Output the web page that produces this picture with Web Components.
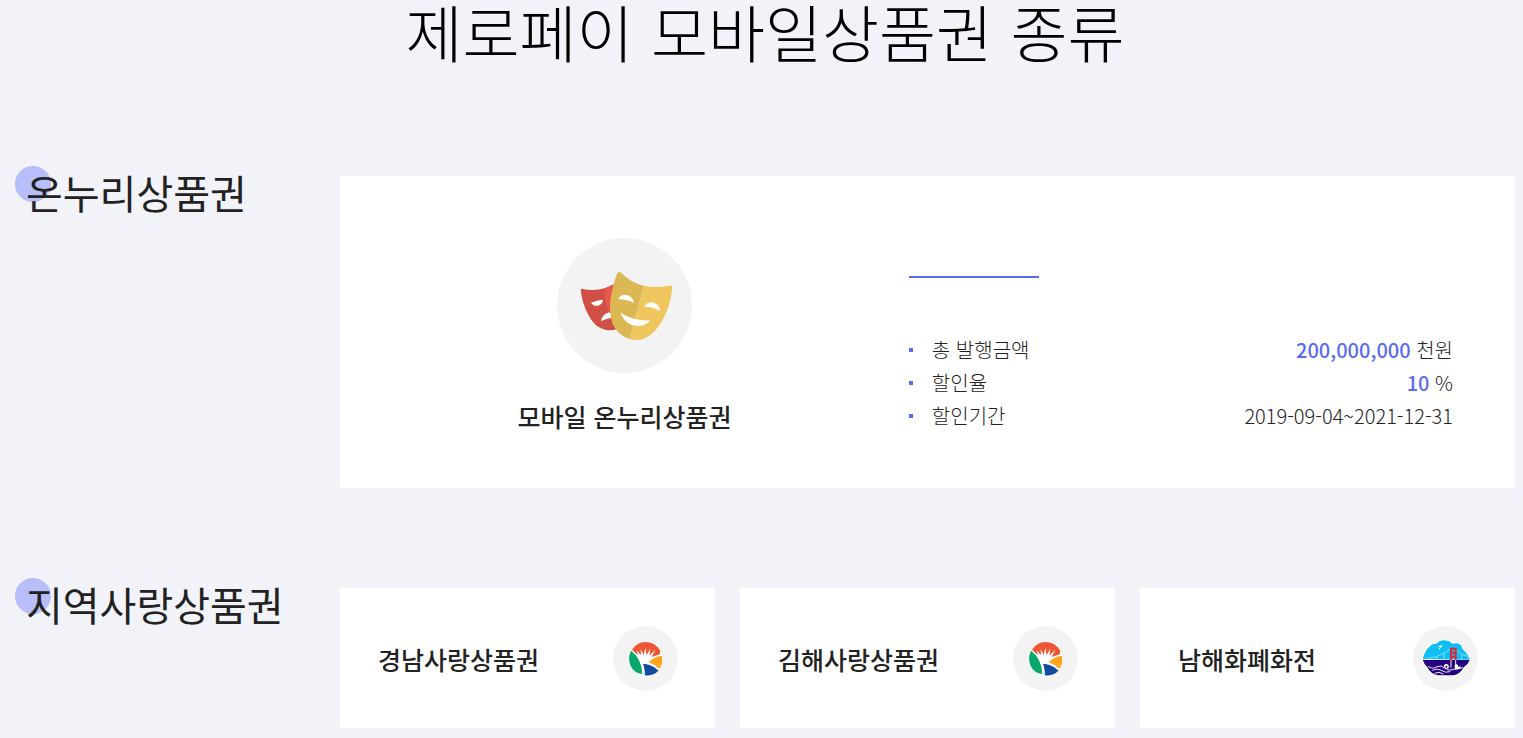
<!DOCTYPE html>
<html lang="ko">
<head>
<meta charset="UTF-8">
<meta name="viewport" content="width=device-width, initial-scale=1.0">
<title>제로페이 모바일상품권</title>
<style>
    body {
        margin: 0;
        background: #f2f3f9;
        color: #222;
        font-family: 'Noto Sans CJK KR', sans-serif;
    }
</style>
</head>
<body>
<gift-page>
    <span slot="title">제로페이 모바일상품권 종류</span>
    <gift-section>
        <span slot="title">온누리상품권</span>
        <gift-feature>
            <gift-icon slot="icon" name="masks"></gift-icon>
            <span slot="name">모바일 온누리상품권</span>
            <gift-info label="총 발행금액" value="200,000,000">천원</gift-info>
            <gift-info label="할인율" value="10">%</gift-info>
            <gift-info label="할인기간">2019-09-04~2021-12-31</gift-info>
        </gift-feature>
    </gift-section>
    <gift-section>
        <span slot="title">지역사랑상품권</span>
        <gift-card>경남사랑상품권<gift-icon slot="icon" name="gyeongnam"></gift-icon></gift-card>
        <gift-card>김해사랑상품권<gift-icon slot="icon" name="gyeongnam"></gift-icon></gift-card>
        <gift-card>남해화폐화전<gift-icon slot="icon" name="namhae"></gift-icon></gift-card>
    </gift-section>
</gift-page>

<script>
const ICONS = {
    masks: `
        <svg viewBox="36 24 405 405" aria-hidden="true">
            <circle cx="238.500" cy="226.500" r="202.500" fill="#f3f3f3"/>
            <path fill="#d05045" d="M107 178Q108 175 113 177Q151 184 181 174L207 163L216 297Q200 303 181 299Q148 292 128 251Q111 219 107 178Z"/>
            <path fill="#e9574f" d="M178 175Q196 171 208 162L207 237L188 248Z"/>
            <path fill="#fff" d="M138 218Q155 211 174 209Q172 224 158 227Q145 229 138 218ZM168 273Q173 251 194 247L212 262Q189 264 168 273Z"/>
            <path fill="#dcb855" d="M217 129Q224 122 232 131Q258 158 297 167L254 327Q218 316 203 282Q187 239 202 178Q208 151 217 129Z"/>
            <path fill="#efc65d" d="M297 167Q331 175 371 167Q383 165 382 174Q377 224 355 266Q330 313 296 326Q276 333 254 327Z"/>
            <path fill="#fff" d="M219 208Q228 192 245 195Q263 200 268 219Q244 207 219 208ZM297 230Q304 217 323 217Q343 222 346 243Q324 230 297 230ZM226 248Q266 273 315 271Q305 287 280 288Q242 287 226 248Z"/>
        </svg>`,
    gyeongnam: `
        <svg viewBox="24 33 195 195" aria-hidden="true">
            <circle cx="121.500" cy="130.500" r="97.500" fill="#f3f3f3"/>
            <circle cx="122" cy="132" r="51" fill="#fff"/>
            <path fill="#ef5634" d="M81 104Q96 81 121 81Q151 81 166 108Q167 117 160 119L140 126L151 104L133 122L136 101L125 121L121 99L116 120L107 102L108 121L94 105L99 120Q89 113 81 104Z"/>
            <path fill="#07a86b" d="M78 107Q110 130 112 177Q87 174 77 153Q67 130 78 107Z"/>
            <path fill="#fba61d" d="M131 142Q147 124 171 122Q175 145 163 162Q151 149 131 142Z"/>
            <path fill="#104da0" d="M114 146Q145 149 160 167Q146 183 119 181Q121 166 114 146Z"/>
        </svg>`,
    namhae: `
        <svg viewBox="24 33 195 195" aria-hidden="true">
            <circle cx="121.500" cy="130.500" r="97.500" fill="#f3f3f3"/>
            <path fill="#fff" d="M48 133Q57 104 69 93Q75 83 92 82Q105 70 119 72Q136 74 145 81Q164 78 173 89Q175 100 185 109Q196 121 198 133Q193 151 181 160Q168 181 148 185H98Q75 182 64 162Q53 149 48 133Z"/>
            <path fill="#0dbff5" d="M53 132Q61 104 73 96Q78 86 94 86Q105 75 119 76Q134 77 143 86Q162 82 169 92Q170 102 181 111Q191 119 194 134Z"/>
            <path fill="#25007e" d="M53 135H194Q189 149 177 156Q165 178 145 181H101Q77 178 67 157Q58 149 53 135Z"/>
            <path fill="none" stroke="#bdeeff" stroke-width="2" d="M65 130Q109 126 136 101M153 102Q164 119 190 124M95 124V133M117 115V133M170 118V133"/>
            <path fill="none" stroke="#fff" stroke-width="3" d="M102 104L110 89M100 94L112 95M138 134V158M152 134V158"/>
            <path fill="none" stroke="#e4243d" stroke-width="6" d="M138 136V101H152V136M138 113H152M138 125H152"/>
            <path fill="none" stroke="#eeeaff" stroke-width="3" d="M69 154Q82 164 96 155Q110 149 120 160Q132 170 150 162L174 158M82 166Q96 158 109 166Q120 175 136 170M89 175Q102 168 115 177"/>
            <path fill="#fff" d="M116 153A8 8 0 1 1 130 160Q121 163 116 153ZM148 152Q153 145 159 150V156L166 153V161L151 164Z"/>
            <circle cx="124" cy="155" r="3" fill="#25007e"/>
        </svg>`
};

class GiftIcon extends HTMLElement {
    constructor() {
        super();
        this.attachShadow({ mode: 'open' });
    }

    connectedCallback() {
        this.shadowRoot.innerHTML = /*html*/ `
            <style>
                :host {
                    display: block;
                    flex: none;
                    width: var(--icon-size, 65px);
                    height: var(--icon-size, 65px);
                }

                svg {
                    display: block;
                    width: 100%;
                    height: 100%;
                }
            </style>
            ${ICONS[this.getAttribute('name')] || ''}
        `;
    }
}

class GiftInfo extends HTMLElement {
    constructor() {
        super();
        this.attachShadow({ mode: 'open' });
    }

    connectedCallback() {
        this.shadowRoot.innerHTML = /*html*/ `
            <style>
                :host {
                    display: block;
                    font-size: 20px;
                    line-height: 33px;
                    font-weight: 300;
                }

                .row {
                    display: flex;
                    align-items: center;
                }

                .row::before {
                    content: '';
                    width: 4px;
                    height: 4px;
                    margin-right: 19px;
                    background: #586ced;
                }

                .value {
                    margin-left: auto;
                }

                strong {
                    color: #586ced;
                    font-weight: 500;
                }
            </style>
            <div class="row">
                <span class="label"></span>
                <span class="value"><strong></strong> <slot></slot></span>
            </div>
        `;
        this.shadowRoot.querySelector('.label').textContent = this.getAttribute('label');
        this.shadowRoot.querySelector('strong').textContent = this.getAttribute('value') || '';
    }
}

class GiftFeature extends HTMLElement {
    constructor() {
        super();
        this.attachShadow({ mode: 'open' });
        this.shadowRoot.innerHTML = /*html*/ `
            <style>
                :host {
                    display: block;
                    grid-column: 1 / -1;
                    background: #fff;
                    --icon-size: 135px;
                }

                .feature {
                    display: grid;
                    grid-template-columns: 23fr 22fr;
                    align-items: start;
                    padding: 62px 62px 52px 0;
                }

                .brand {
                    display: flex;
                    flex-direction: column;
                    align-items: center;
                    gap: 23px;
                }

                h3 {
                    margin: 0;
                    font-size: 25px;
                    line-height: 40px;
                    font-weight: 500;
                }

                .details {
                    padding-top: 38px;
                }

                .line {
                    width: 130px;
                    height: 2px;
                    margin-bottom: 55px;
                    background: #586ced;
                }
            </style>
            <article class="feature">
                <div class="brand">
                    <slot name="icon"></slot>
                    <h3><slot name="name"></slot></h3>
                </div>
                <div class="details">
                    <div class="line"></div>
                    <slot></slot>
                </div>
            </article>
        `;
    }
}

class GiftCard extends HTMLElement {
    constructor() {
        super();
        this.attachShadow({ mode: 'open' });
        this.shadowRoot.innerHTML = /*html*/ `
            <style>
                :host {
                    display: block;
                    background: #fff;
                }

                .card {
                    display: flex;
                    justify-content: space-between;
                    align-items: center;
                    padding: 38px 37px 37px 38px;
                }

                h3 {
                    margin: 0;
                    font-size: 25px;
                    line-height: 40px;
                    font-weight: 500;
                }
            </style>
            <article class="card">
                <h3><slot></slot></h3>
                <slot name="icon"></slot>
            </article>
        `;
    }
}

class GiftSection extends HTMLElement {
    constructor() {
        super();
        this.attachShadow({ mode: 'open' });
        this.shadowRoot.innerHTML = /*html*/ `
            <style>
                :host {
                    display: block;
                }

                section {
                    display: grid;
                    grid-template-columns: 325px 1fr;
                }

                h2 {
                    position: relative;
                    margin: 0;
                    padding-left: 11px;
                    font-size: 40px;
                    line-height: 32px;
                    font-weight: 400;
                }

                /* dot behind the first letter */
                h2::before {
                    content: '';
                    position: absolute;
                    z-index: -1;
                    top: -10px;
                    left: 0;
                    width: 36px;
                    height: 36px;
                    border-radius: 50%;
                    background: #b7bef9;
                }

                .list {
                    display: grid;
                    grid-template-columns: repeat(3, 1fr);
                    gap: 25px;
                }
            </style>
            <section>
                <h2><slot name="title"></slot></h2>
                <div class="list"><slot></slot></div>
            </section>
        `;
    }
}

class GiftPage extends HTMLElement {
    constructor() {
        super();
        this.attachShadow({ mode: 'open' });
        this.shadowRoot.innerHTML = /*html*/ `
            <style>
                :host {
                    display: block;
                }

                main {
                    padding: 0 8px 10px 15px;
                }

                h1 {
                    margin: 0 0 114px;
                    color: #000;
                    font-size: 62px;
                    line-height: 62px;
                    font-weight: 300;
                    text-align: center;
                }

                .sections {
                    display: flex;
                    flex-direction: column;
                    gap: 100px;
                }
            </style>
            <main>
                <h1><slot name="title"></slot></h1>
                <div class="sections"><slot></slot></div>
            </main>
        `;
    }
}

customElements.define('gift-icon', GiftIcon);
customElements.define('gift-info', GiftInfo);
customElements.define('gift-feature', GiftFeature);
customElements.define('gift-card', GiftCard);
customElements.define('gift-section', GiftSection);
customElements.define('gift-page', GiftPage);
</script>
</body>
</html>
